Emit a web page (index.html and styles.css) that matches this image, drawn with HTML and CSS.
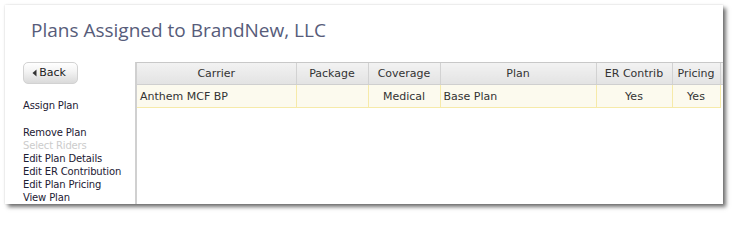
FILE: index.html
```html
<!DOCTYPE html>
<html>
<head>
<meta charset="utf-8">
<link rel="stylesheet" href="styles.css">
</head>
<body>
<div class="panel">
  <h1 class="title">Plans Assigned to BrandNew, LLC</h1>
  <div class="content">
    <div class="side">
      <button class="back"><svg class="arrow" width="5" height="8" viewBox="0 0 5 8"><path d="M4.5 0.5 L0.5 4 L4.5 7.5 Z" fill="#333"/></svg>Back</button>
      <div class="menu">
        <a class="item first">Assign Plan</a>
        <a class="item gap">Remove Plan</a>
        <a class="item disabled">Select Riders</a>
        <a class="item">Edit Plan Details</a>
        <a class="item">Edit ER Contribution</a>
        <a class="item">Edit Plan Pricing</a>
        <a class="item">View Plan</a>
      </div>
    </div>
    <div class="grid">
      <table class="tbl">
        <colgroup>
          <col class="c1"><col class="c2"><col class="c3"><col class="c4"><col class="c5"><col class="c6"><col class="c7">
        </colgroup>
        <thead>
          <tr>
            <th>Carrier</th><th>Package</th><th>Coverage</th><th>Plan</th><th>ER Contrib</th><th>Pricing</th><th class="pad"></th>
          </tr>
        </thead>
        <tbody>
          <tr class="sel">
            <td class="l">Anthem MCF BP</td><td></td><td class="c">Medical</td><td class="l">Base Plan</td><td class="c">Yes</td><td class="c">Yes</td><td class="pad"></td>
          </tr>
        </tbody>
      </table>
    </div>
  </div>
</div>
</body>
</html>
```

FILE: styles.css
```css
html, body {
  margin: 0;
  padding: 0;
  background: #ffffff;
}
body {
  font-family: "DejaVu Sans", Verdana, sans-serif;
  height: 214px;
}
.panel {
  margin: 5px 0 0 5px;
  width: 718px;
  height: 199px;
  background: #fff;
  box-shadow: 0 0 2px rgba(0,0,0,0.15), 3px 3px 4px rgba(0,0,0,0.55);
  display: flex;
  flex-direction: column;
}
.title {
  margin: 0;
  padding: 12px 0 0 26px;
  height: 43px;
  box-sizing: border-box;
  font-family: "Open Sans", sans-serif;
  font-weight: normal;
  font-size: 19px;
  line-height: 26px;
  color: #575c7a;
}
.content {
  flex: 1;
  display: flex;
  min-height: 0;
  padding-top: 14px;
}
.side {
  width: 130px;
  padding-left: 18px;
  box-sizing: border-box;
  flex: none;
}
.back {
  display: flex;
  align-items: center;
  justify-content: center;
  width: 55px;
  height: 22px;
  padding: 0 3px 1px 0;
  border: 1px solid #d2d2d2;
  border-radius: 5px;
  background: linear-gradient(#ffffff 0%, #f2f2f2 45%, #dadada 100%);
  font-family: "DejaVu Sans", sans-serif;
  font-size: 11px;
  color: #222;
}
.arrow {
  margin-right: 2px;
}
.menu {
  display: flex;
  flex-direction: column;
  padding-top: 15px;
  font-size: 10px;
  line-height: 13px;
  letter-spacing: -0.15px;
}
.item {
  color: #1d2033;
}
.item.gap {
  margin-top: 14px;
}
.item.disabled {
  color: #cccccc;
}
.grid {
  flex: 1;
  border-left: 2px solid #d0d0d0;
  border-top: 1px solid #c8c8c8;
  margin-right: 1px;
}
.tbl {
  border-collapse: collapse;
  table-layout: fixed;
  width: 586px;
  font-size: 11px;
  color: #333;
}
.c1 { width: 159px; }
.c2 { width: 72px; }
.c3 { width: 72px; }
.c4 { width: 156px; }
.c5 { width: 76px; }
.c6 { width: 48px; }
.c7 { width: 3px; }
.tbl th {
  height: 21px;
  padding: 0;
  font-weight: normal;
  text-align: center;
  background: linear-gradient(#f2f2f2, #e3e3e3);
  border-right: 1px solid #d2d2d2;
  border-bottom: 1px solid #cfcfcf;
  color: #333;
  white-space: nowrap;
  overflow: hidden;
}
.tbl th.pad {
  border-right: none;
}
.tbl td {
  height: 22px;
  padding: 0 3px;
  background: #fcfaee;
  border-right: 1px solid #f6eaa9;
  border-bottom: 1px solid #f6eaa9;
  white-space: nowrap;
  overflow: hidden;
}
.tbl td.pad {
  background: #fff;
  border: none;
}
.l { text-align: left; }
.r { text-align: right; }
.c { text-align: center; }
```
